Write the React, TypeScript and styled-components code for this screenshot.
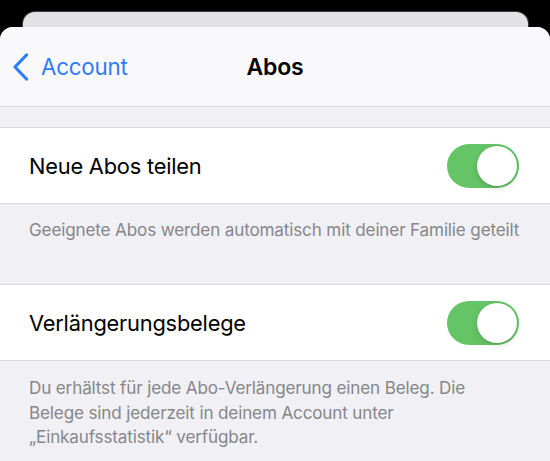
import React from "react";
import styled, { createGlobalStyle } from "styled-components";

const GlobalStyle = createGlobalStyle`
  html, body { margin: 0; padding: 0; background: #000; }
  body { font-family: Inter, "Noto Sans", sans-serif; -webkit-font-smoothing: antialiased; }
`;

const Screen = styled.div`
  width: 550px;
  height: 461px;
  overflow: hidden;
  background: #000;
  padding-top: 12px;
  box-sizing: border-box;
  display: flex;
  flex-direction: column;
`;

const BackSheet = styled.div`
  margin: 0 22px 0 23px;
  height: 15px;
  flex: none;
  background: #e2e2e4;
  border-radius: 12px 12px 0 0;
  box-shadow: 0 0 0 1px #3c3c3e;
`;

const Sheet = styled.div`
  flex: 1;
  background: #f0f0f5;
  border-radius: 13px 13px 0 0;
  overflow: hidden;
  display: flex;
  flex-direction: column;
  position: relative;
`;

const NavBar = styled.div`
  height: 79px;
  flex: none;
  background: #f9f9fb;
  border-bottom: 1px solid #d6d6da;
  display: grid;
  grid-template-columns: 1fr auto 1fr;
  align-items: center;
`;

const BackButton = styled.div`
  display: flex;
  align-items: center;
  gap: 12px;
  padding-left: 13px;
  color: #2f7cf6;
  font-size: 22.3px;
  letter-spacing: -0.2px;
`;

const Title = styled.div`
  font-size: 23px;
  font-weight: 600;
  color: #000;
  letter-spacing: -0.2px;
`;

const SectionGap = styled.div<{ h: number }>`
  height: ${(p) => p.h}px;
  flex: none;
`;

const Row = styled.div`
  height: 75px;
  flex: none;
  background: #fff;
  border-top: 1px solid #d8d8dc;
  border-bottom: 1px solid #d8d8dc;
  display: flex;
  align-items: center;
  justify-content: space-between;
  padding: 0 31px 0 29px;
`;

const RowLabel = styled.div`
  font-size: 21.8px;
  color: #000;
  letter-spacing: -0.2px;
`;

const Footer = styled.div<{ pt: number; h: number }>`
  height: ${(p) => p.h}px;
  box-sizing: border-box;
  flex: none;
  padding: ${(p) => p.pt}px 10px 0 29px;
  font-size: 17.1px;
  line-height: 24.5px;
  color: #86868a;
  letter-spacing: -0.15px;
`;

const FooterLine = styled.span`
  display: block;
  white-space: nowrap;
`;

const ToggleTrack = styled.div<{ on: boolean }>`
  width: 72px;
  height: 44px;
  border-radius: 22px;
  background: ${(p) => (p.on ? "#65c466" : "#e9e9ea")};
  position: relative;
  flex: none;
`;

const ToggleKnob = styled.div<{ on: boolean }>`
  position: absolute;
  top: 2px;
  left: ${(p) => (p.on ? "30px" : "2px")};
  width: 40px;
  height: 40px;
  border-radius: 50%;
  background: #fff;
  box-shadow: 0 2px 6px rgba(0, 0, 0, 0.15), 0 1px 1px rgba(0, 0, 0, 0.08);
`;

const Toggle = ({ on }: { on: boolean }) => (
  <ToggleTrack on={on}>
    <ToggleKnob on={on} />
  </ToggleTrack>
);

const Chevron = () => (
  <svg width="16" height="28" viewBox="0 0 16 28" fill="none">
    <path
      d="M13.5 2 L2 14 L13.5 26"
      stroke="#2f7cf6"
      strokeWidth="3.2"
      strokeLinecap="round"
      strokeLinejoin="round"
    />
  </svg>
);

export default function App() {
  return (
    <>
      <GlobalStyle />
      <Screen>
        <BackSheet />
        <Sheet>
          <NavBar>
            <BackButton>
              <Chevron />
              <span>Account</span>
            </BackButton>
            <Title>Abos</Title>
            <div />
          </NavBar>
          <SectionGap h={20} />
          <Row>
            <RowLabel>Neue Abos teilen</RowLabel>
            <Toggle on />
          </Row>
          <Footer pt={14} h={80}>
            <FooterLine>Geeignete Abos werden automatisch mit deiner Familie geteilt</FooterLine>
          </Footer>
          <Row>
            <RowLabel>Verlängerungsbelege</RowLabel>
            <Toggle on />
          </Row>
          <Footer pt={15} h={100}>
            <FooterLine>Du erhältst für jede Abo-Verlängerung einen Beleg. Die</FooterLine>
            <FooterLine>Belege sind jederzeit in deinem Account unter</FooterLine>
            <FooterLine>„Einkaufsstatistik“ verfügbar.</FooterLine>
          </Footer>
        </Sheet>
      </Screen>
    </>
  );
}
